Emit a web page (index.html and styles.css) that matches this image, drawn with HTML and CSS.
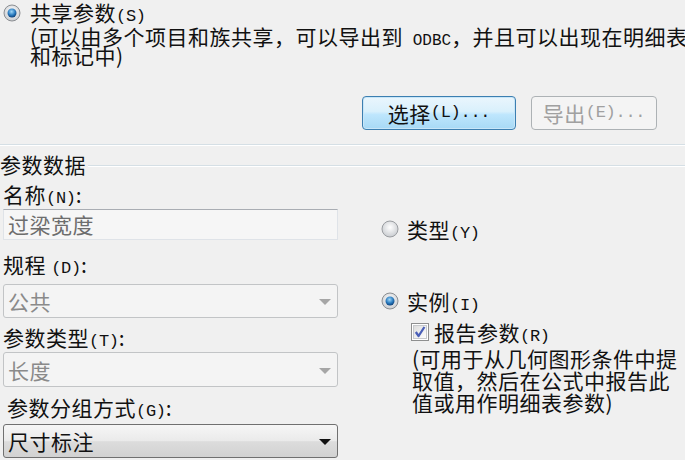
FILE: index.html
```html
<!DOCTYPE html>
<html>
<head>
<meta charset="utf-8">
<link rel="stylesheet" href="styles.css">
</head>
<body>
<div class="dialog">
  <div class="shared">
    <svg class="radio" viewBox="0 0 18 18" width="18" height="18">
      <defs>
        <radialGradient id="rg1" cx="50%" cy="40%" r="60%"><stop offset="0" stop-color="#ffffff"/><stop offset="1" stop-color="#c9ccd0"/></radialGradient>
        <radialGradient id="bd1" cx="45%" cy="35%" r="65%"><stop offset="0" stop-color="#9fd6f7"/><stop offset="0.6" stop-color="#2a7cc0"/><stop offset="1" stop-color="#0d3f78"/></radialGradient>
      </defs>
      <circle cx="9" cy="9" r="8" fill="url(#rg1)" stroke="#8b8e92" stroke-width="1"/>
      <circle cx="9" cy="9" r="4.5" fill="url(#bd1)"/>
    </svg>
    <div class="shared-text">
      <div class="title">共享参数<span class="m">(S)</span></div>
      <div class="desc">(可以由多个项目和族共享，可以导出到<span class="m m-odbc"> ODBC</span>，并且可以出现在明细表<br>和标记中)</div>
    </div>
  </div>

  <div class="buttons">
    <div class="btn primary">选择<span class="m">(L)...</span></div>
    <div class="btn disabled">导出<span class="m">(E)...</span></div>
  </div>

  <div class="sep"></div>

  <div class="group-head"><span class="group-title">参数数据</span><span class="rule"></span></div>

  <div class="group">
    <div class="left">
      <div class="label l-name">名称<span class="m">(N)</span>:</div>
      <div class="textbox">过梁宽度</div>

      <div class="label l-disc">规程 <span class="m">(D)</span>:</div>
      <div class="combo off combo-1"><span>公共</span><span class="arrow"></span></div>

      <div class="label l-type">参数类型<span class="m">(T)</span>:</div>
      <div class="combo off combo-2"><span>长度</span><span class="arrow"></span></div>

      <div class="label l-group">参数分组方式<span class="m">(G)</span>:</div>
      <div class="combo on combo-3"><span>尺寸标注</span><span class="arrow"></span></div>
    </div>

    <div class="right">
      <div class="opt opt-type">
        <svg class="radio" viewBox="0 0 18 18" width="18" height="18">
          <defs>
            <radialGradient id="rg2" cx="50%" cy="40%" r="60%"><stop offset="0" stop-color="#ffffff"/><stop offset="1" stop-color="#c9ccd0"/></radialGradient>
          </defs>
          <circle cx="9" cy="9" r="8" fill="url(#rg2)" stroke="#9a9da1" stroke-width="1"/>
        </svg>
        <span>类型<span class="m">(Y)</span></span>
      </div>
      <div class="opt opt-inst">
        <svg class="radio" viewBox="0 0 18 18" width="18" height="18">
          <defs>
            <radialGradient id="rg3" cx="50%" cy="40%" r="60%"><stop offset="0" stop-color="#ffffff"/><stop offset="1" stop-color="#c9ccd0"/></radialGradient>
            <radialGradient id="bd3" cx="45%" cy="35%" r="65%"><stop offset="0" stop-color="#9fd6f7"/><stop offset="0.6" stop-color="#2a7cc0"/><stop offset="1" stop-color="#0d3f78"/></radialGradient>
          </defs>
          <circle cx="9" cy="9" r="8" fill="url(#rg3)" stroke="#8b8e92" stroke-width="1"/>
          <circle cx="9" cy="9" r="4.5" fill="url(#bd3)"/>
        </svg>
        <span>实例<span class="m">(I)</span></span>
      </div>
      <div class="opt opt-report">
        <svg class="check" viewBox="0 0 18 18" width="18" height="18">
          <defs>
            <linearGradient id="cg" x1="0" y1="0" x2="1" y2="1"><stop offset="0" stop-color="#dcdcdc"/><stop offset="1" stop-color="#ffffff"/></linearGradient>
          </defs>
          <rect x="0.5" y="0.5" width="17" height="17" fill="#ffffff" stroke="#8e8f8f"/>
          <rect x="2.5" y="2.5" width="13" height="13" fill="url(#cg)" stroke="#c7c9cc"/>
          <path d="M4.8 9 L7.6 13 L13.4 4" fill="none" stroke="#4a5fb8" stroke-width="2.3" stroke-linejoin="round"/>
        </svg>
        <span>报告参数<span class="m">(R)</span></span>
      </div>
      <div class="note">(可用于从几何图形条件中提<br>取值，然后在公式中报告此<br>值或用作明细表参数)</div>
    </div>
  </div>
</div>
</body>
</html>
```

FILE: styles.css
```css
html, body {
  margin: 0;
  padding: 0;
  background: #f0f0f0;
  overflow: hidden;
}

.dialog {
  width: 685px;
  height: 460px;
  overflow: hidden;
  font-family: "Noto Sans CJK SC", "Noto Sans", sans-serif;
  font-size: 21px;
  letter-spacing: 0.5px;
  color: #111;
  white-space: nowrap;
}

.m {
  font-family: "Liberation Mono", monospace;
  font-size: 17px;
  line-height: 0;
  letter-spacing: -0.3px;
}

.m-odbc {
  font-size: 16px;
  letter-spacing: 0;
}

/* top shared section */
.shared {
  display: flex;
  align-items: flex-start;
  padding-top: 2px;
  padding-left: 3px;
}

.shared .radio {
  margin-top: 2px;
  flex: none;
}

.shared-text {
  margin-left: 9px;
}

.title {
  line-height: 20px;
  height: 20px;
}

.desc {
  margin-top: 5px;
  line-height: 19px;
}

/* buttons */
.buttons {
  display: flex;
  justify-content: flex-end;
  gap: 15px;
  padding-right: 28px;
  margin-top: 31px;
}

.btn {
  height: 34px;
  box-sizing: border-box;
  border-radius: 4px;
  display: flex;
  align-items: center;
  justify-content: center;
  line-height: 20px;
}

.btn.primary {
  width: 154px;
  border: 1px solid #3c7fb1;
  background: linear-gradient(#eaf6fd 0%, #d9f0fc 45%, #bee6fd 55%, #a7d9f5 100%);
  box-shadow: inset 0 0 0 1px #c8e6f8;
  color: #111;
}

.btn.disabled {
  width: 126px;
  border: 1px solid #adb2b5;
  background: #f4f4f4;
  color: #a0a0a0;
}

/* separator */
.sep {
  margin-top: 14px;
  height: 1px;
  background: #d5dfe5;
  border-bottom: 1px solid #ffffff;
}

.group-head {
  display: flex;
  align-items: center;
  margin-top: 7px;
  line-height: 23px;
  height: 23px;
}

.group-title {
  flex: none;
}

.rule {
  flex: 1;
  height: 1px;
  margin-left: 2px;
  margin-top: 3px;
  background: #d5dfe5;
  border-bottom: 1px solid #ffffff;
}

/* group body */
.group {
  display: flex;
  align-items: flex-start;
}

.left {
  width: 335px;
  margin-left: 3px;
  display: flex;
  flex-direction: column;
}

.label {
  line-height: 22px;
  height: 22px;
}

.l-name { margin-top: 7px; }
.l-disc { margin-top: 13px; }
.l-type { margin-top: 8px; }
.l-group { margin-top: 9px; padding-left: 4px; }

.textbox {
  margin-top: 4px;
  height: 31px;
  box-sizing: border-box;
  border: 1px solid #dfe3e8;
  border-top-color: #a9adb3;
  background: #f6f6f6;
  color: #6d6d6d;
  padding-left: 4px;
  line-height: 29px;
}

.combo {
  box-sizing: border-box;
  border-radius: 3px;
  display: flex;
  align-items: center;
  justify-content: space-between;
  padding-left: 4px;
  padding-right: 6px;
}

.combo.off {
  border: 1px solid #c2c4c6;
  background: #f4f4f4;
  color: #8a8a8a;
}

.combo.on {
  border: 1px solid #707070;
  background: linear-gradient(#f6f6f6 0%, #eaeaea 50%, #dcdcdc 52%, #d2d2d2 100%);
  color: #111;
}

.combo-1 { margin-top: 9px; height: 34px; }
.combo-2 { margin-top: 4px; height: 35px; }
.combo-3 { margin-top: 6px; height: 34px; }

.arrow {
  width: 0;
  height: 0;
  border-left: 6px solid transparent;
  border-right: 6px solid transparent;
  border-top: 6px solid #a6a6a6;
  margin-top: 2px;
}

.combo.on .arrow {
  border-top-color: #111;
}

/* right column */
.right {
  margin-left: 43px;
  display: flex;
  flex-direction: column;
}

.opt {
  display: flex;
  align-items: center;
  line-height: 22px;
  height: 22px;
}

.opt .radio {
  margin-right: 8px;
}

.opt-type { margin-top: 42px; color: #111; }
.opt-inst { margin-top: 50px; }
.opt-report { margin-top: 9px; padding-left: 30px; }

.opt-report .check {
  margin-right: 5px;
}

.note {
  margin-top: 4px;
  padding-left: 31px;
  line-height: 22px;
}
```
